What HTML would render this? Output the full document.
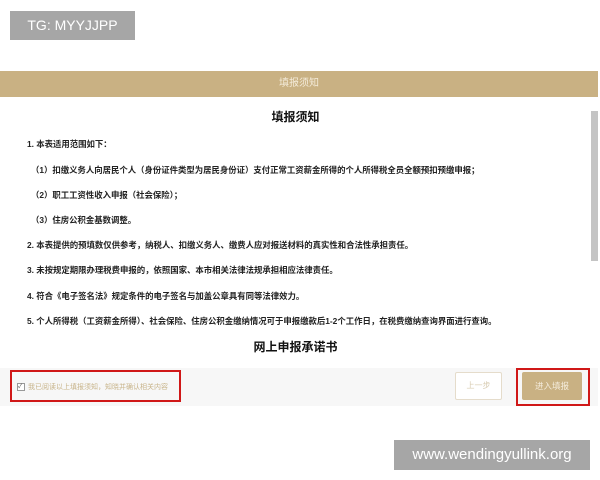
<!DOCTYPE html>
<html><head><meta charset="utf-8"><style>
body{margin:0;width:600px;height:480px;background:#fff;position:relative;overflow:hidden;font-family:"Liberation Sans","Noto Sans CJK SC",sans-serif;}
.tg{position:absolute;left:10px;top:11px;width:125px;height:29px;background:#a6a6a6;color:#fff;font-size:14px;line-height:29px;text-align:center;}
.hdr{position:absolute;left:0;top:71px;width:598px;height:26px;background:#c9b183;color:#f3ead8;font-size:10px;line-height:26px;text-align:center;}
.sb{position:absolute;left:591px;top:111px;width:7px;height:150px;background:#c4c4c4;}
.t{position:absolute;font-size:8.4px;font-weight:bold;color:#222;white-space:nowrap;}
.h{position:absolute;font-size:12px;font-weight:bold;color:#111;width:591px;text-align:center;}
.ft{position:absolute;left:0;top:368px;width:598px;height:38px;background:#f7f7f7;}
.rb{position:absolute;border:2px solid #d01818;box-sizing:border-box;}
.wm{position:absolute;left:394px;top:440px;width:196px;height:30px;background:#a6a6a6;color:#fff;font-size:15px;line-height:30px;text-align:center;}
</style></head><body>
<div class="tg">TG: MYYJJPP</div>
<div class="hdr">填报须知</div>
<div class="sb"></div>
<div class="h" style="top:108px">填报须知</div>
<div class="t" style="left:27px;top:138px">1. 本表适用范围如下：</div>
<div class="t" style="left:31px;top:164px">（1）扣缴义务人向居民个人（身份证件类型为居民身份证）支付正常工资薪金所得的个人所得税全员全额预扣预缴申报；</div>
<div class="t" style="left:31px;top:189px">（2）职工工资性收入申报（社会保险）；</div>
<div class="t" style="left:31px;top:214px">（3）住房公积金基数调整。</div>
<div class="t" style="left:27px;top:239px">2. 本表提供的预填数仅供参考，纳税人、扣缴义务人、缴费人应对报送材料的真实性和合法性承担责任。</div>
<div class="t" style="left:27px;top:264px">3. 未按规定期限办理税费申报的，依照国家、本市相关法律法规承担相应法律责任。</div>
<div class="t" style="left:27px;top:290px">4. 符合《电子签名法》规定条件的电子签名与加盖公章具有同等法律效力。</div>
<div class="t" style="left:27px;top:315px">5. 个人所得税（工资薪金所得）、社会保险、住房公积金缴纳情况可于申报缴款后1-2个工作日，在税费缴纳查询界面进行查询。</div>
<div class="h" style="top:338px">网上申报承诺书</div>
<div class="ft"></div>
<div style="position:absolute;left:17px;top:383px;width:6px;height:6px;border:1px solid #999;background:#fff;font-size:6px;line-height:6px;color:#555">✓</div>
<div class="t" style="left:28px;top:382px;font-weight:normal;font-size:7px;color:#c8b48a">我已阅读以上填报须知，知晓并确认相关内容</div>
<div class="rb" style="left:10px;top:370px;width:171px;height:32px"></div>
<div style="position:absolute;left:455px;top:372px;width:45px;height:26px;border:1px solid #e5dccb;border-radius:2px;background:#fff;color:#d8ccb2;font-size:8px;line-height:26px;text-align:center">上一步</div>
<div style="position:absolute;left:522px;top:372px;width:60px;height:28px;background:#c9b183;border-radius:2px;color:#f4ecdc;font-size:8.5px;line-height:28px;text-align:center">进入填报</div>
<div class="rb" style="left:516px;top:368px;width:74px;height:38px"></div>
<div class="wm">www.wendingyullink.org</div>
</body></html>
